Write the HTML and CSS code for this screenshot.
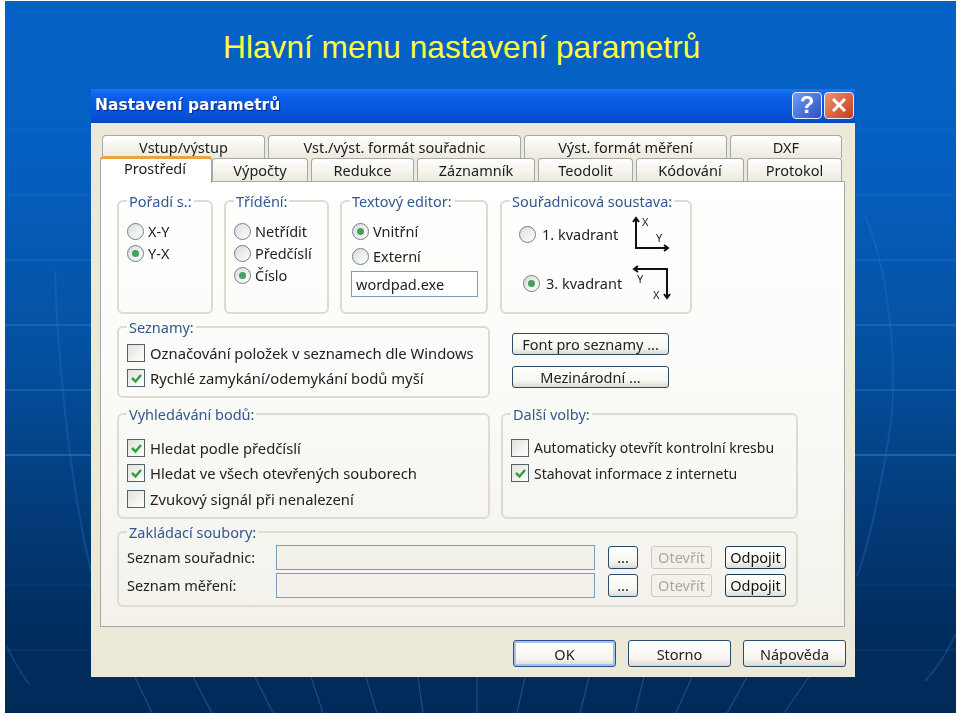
FILE: index.html
```html
<!DOCTYPE html>
<html lang="cs">
<head>
    <meta charset="UTF-8">
    <title>Hlavní menu nastavení parametrů</title>
    <link rel="stylesheet" href="styles.css">
</head>
<body>
    <div class="slide">
        <svg class="backdrop" width="951" height="712" viewBox="0 0 951 712">
            <g class="hlines">
                <path class="l1" d="M0 129H951"/>
                <path class="l2" d="M0 194H951"/>
                <path class="l3" d="M0 259H951"/>
                <path class="l4" d="M0 324H951"/>
                <path class="l4" d="M0 389H951"/>
                <path class="l5" d="M0 454H951"/>
                <path class="l1" d="M0 584H951"/>
                <path class="l1" d="M0 649H951"/>
            </g>
            <g class="rays">
                <path d="M130 676L147 712M188 676L207 712M250 676L268 712M306 676L318 712M361 676L372 712M413 676L418 712M472 676V712M520 676L512 712M584 676L575 712M639 676L630 712M687 676L671 712M742 676L722 712M804 676L779 712"/>
            </g>
            <g class="curves">
                <path d="M50 270C52 340 62 470 86 570"/>
                <path d="M860 215C885 270 895 380 883 440C875 490 865 540 852 575"/>
                <path d="M2 645C8 660 16 672 24 683"/>
                <path d="M920 680C935 665 945 645 951 632"/>
            </g>
        </svg>

        <h1 class="title">Hlavní menu nastavení parametrů</h1>

        <div class="dialog">
            <div class="titlebar">
                <span class="titlebar-text">Nastavení parametrů</span>
                <span class="win-btn win-help">?</span>
                <span class="win-btn win-close">
                    <svg width="18" height="18" viewBox="0 0 18 18"><path d="M3 3L15 15M15 3L3 15"/></svg>
                </span>
            </div>

            <div class="tabs tabs-back">
                <div class="tab w163">Vstup/výstup</div>
                <div class="tab w253">Vst./výst. formát souřadnic</div>
                <div class="tab w203">Výst. formát měření</div>
                <div class="tab w112">DXF</div>
            </div>
            <div class="tabs tabs-front">
                <div class="tab tab-active">Prostředí</div>
                <div class="tab w96">Výpočty</div>
                <div class="tab w103">Redukce</div>
                <div class="tab w118">Záznamník</div>
                <div class="tab w95">Teodolit</div>
                <div class="tab w108">Kódování</div>
                <div class="tab w95">Protokol</div>
            </div>

            <div class="panel">
                <div class="row row-top">
                    <fieldset class="group g-poradi">
                        <legend>Pořadí s.:</legend>
                        <div class="opts">
                            <div class="opt"><span class="radio"></span>X-Y</div>
                            <div class="opt"><span class="radio on"></span>Y-X</div>
                        </div>
                    </fieldset>
                    <fieldset class="group g-trideni">
                        <legend>Třídění:</legend>
                        <div class="opts">
                            <div class="opt"><span class="radio"></span>Netřídit</div>
                            <div class="opt"><span class="radio"></span>Předčíslí</div>
                            <div class="opt"><span class="radio on"></span>Číslo</div>
                        </div>
                    </fieldset>
                    <fieldset class="group g-editor">
                        <legend>Textový editor:</legend>
                        <div class="opts">
                            <div class="opt"><span class="radio on"></span>Vnitřní</div>
                            <div class="opt opt-extern"><span class="radio"></span>Externí</div>
                            <div class="textbox">wordpad.exe</div>
                        </div>
                    </fieldset>
                    <fieldset class="group g-soustava">
                        <legend>Souřadnicová soustava:</legend>
                        <div class="quad">
                            <span class="radio"></span>1. kvadrant
                            <svg class="axes" width="42" height="38" viewBox="0 0 42 38">
                                <path d="M6 3V33H38M3 7L6 3L9 7M34 30L38 33L34 36"/>
                                <text x="12" y="11">X</text>
                                <text x="26" y="27">Y</text>
                            </svg>
                        </div>
                        <div class="quad quad-low">
                            <span class="radio on"></span>3. kvadrant
                            <svg class="axes" width="42" height="38" viewBox="0 0 42 38">
                                <path d="M4 5H37V34M8 2L4 5L8 8M34 30L37 34L40 30"/>
                                <text x="7" y="19">Y</text>
                                <text x="23" y="35">X</text>
                            </svg>
                        </div>
                    </fieldset>
                </div>

                <div class="row row-lists">
                    <fieldset class="group g-wide">
                        <legend>Seznamy:</legend>
                        <div class="checks-lists">
                            <div class="opt check-row"><span class="check"></span>Označování položek v seznamech dle Windows</div>
                            <div class="opt check-row">
                                <span class="check"><svg width="15" height="15" viewBox="0 0 15 15"><path d="M3 7L6.500 10.500L12 4"/></svg></span>Rychlé zamykání/odemykání bodů myší
                            </div>
                        </div>
                    </fieldset>
                    <div class="side-btns">
                        <button class="btn">Font pro seznamy ...</button>
                        <button class="btn">Mezinárodní ...</button>
                    </div>
                </div>

                <div class="row row-search">
                    <fieldset class="group g-wide">
                        <legend>Vyhledávání bodů:</legend>
                        <div class="checks">
                            <div class="opt check-row">
                                <span class="check"><svg width="15" height="15" viewBox="0 0 15 15"><path d="M3 7L6.500 10.500L12 4"/></svg></span>Hledat podle předčíslí
                            </div>
                            <div class="opt check-row">
                                <span class="check"><svg width="15" height="15" viewBox="0 0 15 15"><path d="M3 7L6.500 10.500L12 4"/></svg></span>Hledat ve všech otevřených souborech
                            </div>
                            <div class="opt check-row"><span class="check"></span>Zvukový signál při nenalezení</div>
                        </div>
                    </fieldset>
                    <fieldset class="group g-more">
                        <legend>Další volby:</legend>
                        <div class="checks">
                            <div class="opt check-row"><span class="check"></span>Automaticky otevřít kontrolní kresbu</div>
                            <div class="opt check-row">
                                <span class="check"><svg width="15" height="15" viewBox="0 0 15 15"><path d="M3 7L6.500 10.500L12 4"/></svg></span>Stahovat informace z internetu
                            </div>
                        </div>
                    </fieldset>
                </div>

                <fieldset class="group g-files">
                    <legend>Zakládací soubory:</legend>
                    <div class="file-row">
                        <span class="file-label">Seznam souřadnic:</span>
                        <span class="file-input"></span>
                        <button class="btn btn-dots">...</button>
                        <button class="btn btn-small" disabled>Otevřít</button>
                        <button class="btn btn-small btn-strong">Odpojit</button>
                    </div>
                    <div class="file-row">
                        <span class="file-label">Seznam měření:</span>
                        <span class="file-input"></span>
                        <button class="btn btn-dots">...</button>
                        <button class="btn btn-small" disabled>Otevřít</button>
                        <button class="btn btn-small btn-strong">Odpojit</button>
                    </div>
                </fieldset>
            </div>

            <div class="actions">
                <button class="btn btn-action btn-default">OK</button>
                <button class="btn btn-action">Storno</button>
                <button class="btn btn-action">Nápověda</button>
            </div>
        </div>
    </div>
</body>
</html>
```

FILE: styles.css
```css
* {
    box-sizing: border-box;
    margin: 0;
    padding: 0;
}

html, body {
    height: 716px;
    overflow: hidden;
    background: #fff;
}

.slide {
    position: relative;
    width: 951px;
    height: 712px;
    margin: 1px 0 0 5px;
    background: linear-gradient(180deg, #0661c6 0%, #0560c2 20%, #04509f 50%, #033f80 68%, #012d5e 88%, #012a58 100%);
    font-family: "Noto Sans", sans-serif;
}

.backdrop {
    position: absolute;
    left: 0;
    top: 0;
}

.backdrop path {
    fill: none;
}

.hlines path {
    stroke: #3b85e0;
    stroke-width: 1.500;
}

.hlines .l1 { opacity: .12; }
.hlines .l2 { opacity: .2; }
.hlines .l3 { opacity: .3; }
.hlines .l4 { opacity: .45; }
.hlines .l5 { opacity: .6; }

.rays path {
    stroke: #1a4c8c;
    stroke-width: 1.200;
}

.curves path {
    stroke: #2a76d0;
    stroke-width: 2;
    opacity: .3;
}

.title {
    position: relative;
    height: 88px;
    padding: 26px 0 0 218px;
    font: normal 31.700px/40px "Liberation Sans", Arial, sans-serif;
    color: #ffff3c;
}

.dialog {
    position: relative;
    width: 764px;
    height: 588px;
    margin-left: 86px;
    background: #ece9d8;
    filter: blur(.35px);
}

.titlebar {
    display: flex;
    align-items: center;
    height: 34px;
    padding: 0 1px 2px 4px;
    background: linear-gradient(180deg, #1a74f2 0%, #0a5ee6 25%, #0754dc 70%, #0848c6 100%);
}

.titlebar-text {
    flex: 1;
    font: bold 15.500px/20px "DejaVu Sans", sans-serif;
    color: #fff;
    text-shadow: 1px 1px 1px #0a2a80;
}

.win-btn {
    display: flex;
    align-items: center;
    justify-content: center;
    width: 30px;
    height: 27px;
    margin-left: 2px;
    border: 1px solid #e6eeff;
    border-radius: 4px;
}

.win-help {
    background: linear-gradient(135deg, #6e9df2, #2c50c8);
    font: bold 24px/24px "Liberation Sans", Arial, sans-serif;
    color: #fff;
}

.win-close {
    background: linear-gradient(135deg, #ec9378, #c63c18);
}

.win-close path {
    fill: none;
    stroke: #fff;
    stroke-width: 3;
}

.tabs {
    display: flex;
    font-size: 14.500px;
    color: #1c1c1c;
}

.tabs-back {
    gap: 3px;
    margin: 12px 0 0 11px;
    height: 23px;
}

.tabs-front {
    gap: 3px;
    margin-left: 9px;
    height: 23px;
    position: relative;
    z-index: 2;
}

.tab {
    display: flex;
    align-items: center;
    justify-content: center;
    border: 1px solid #a3a9a9;
    border-bottom: 0;
    border-radius: 4px 4px 0 0;
    background: linear-gradient(180deg, #fff, #ece9dc);
    line-height: 20px;
}

.w163 { width: 163px; }
.w253 { width: 253px; }
.w203 { width: 203px; }
.w112 { width: 112px; }
.w96 { width: 96px; margin-left: -3px; }
.w103 { width: 103px; }
.w118 { width: 118px; }
.w95 { width: 95px; }
.w108 { width: 108px; }

.tab-active {
    width: 112px;
    height: 27px;
    margin-top: -2px;
    padding: 0 2px 7px 0;
    background: #fff;
    border-top: 3px solid #eda33c;
    border-color: #eda33c #a3a9a9 #fff;
}

.panel {
    position: relative;
    width: 745px;
    height: 446px;
    margin-left: 9px;
    padding: 10px 0 0 16px;
    border: 1px solid #a3a9a9;
    background: linear-gradient(180deg, #fff 0%, #fafaf7 50%, #f3f1ea 100%);
    font-size: 14.500px;
    color: #222;
}

.row {
    display: flex;
}

.row-top {
    height: 122px;
}

.row-lists {
    height: 80px;
    margin-top: 4px;
}

.row-search {
    height: 114px;
    margin-top: 7px;
}

.group {
    border: 2px solid #dedcd0;
    border-radius: 6px;
    min-width: 0;
}

.group legend {
    margin-left: 8px;
    padding: 0 2px;
    font-size: 14.500px;
    line-height: 18px;
    white-space: nowrap;
    color: #33578f;
}

.g-poradi { width: 96px; margin-right: 11px; }
.g-trideni { width: 105px; margin-right: 11px; }
.g-editor { width: 148px; margin-right: 12px; }
.g-soustava { width: 192px; }
.g-wide { width: 373px; font-size: 14.800px; }
.g-more { width: 297px; margin-left: 11px; font-size: 14px; }
.g-files { width: 681px; height: 84px; margin-top: 4px; padding-top: 2px; }

.opts {
    padding: 10px 0 0 8px;
}

.opt {
    display: flex;
    align-items: center;
    height: 22px;
    white-space: nowrap;
}

.opt-extern {
    margin-top: 3px;
}

.radio {
    position: relative;
    flex: none;
    width: 17px;
    height: 17px;
    margin-right: 4px;
    border: 1px solid #6d8090;
    border-radius: 50%;
    background: linear-gradient(135deg, #dcdcd6, #fff);
}

.radio.on::after {
    content: "";
    position: absolute;
    left: 4px;
    top: 4px;
    width: 7px;
    height: 7px;
    border-radius: 50%;
    background: #45a05a;
}

.g-trideni .opts { padding-left: 8px; }
.g-editor .opts { padding-left: 10px; }

.textbox {
    width: 127px;
    height: 26px;
    margin: 4px 0 0 -1px;
    padding-left: 4px;
    border: 1px solid #7f9db9;
    background: #fff;
    line-height: 24px;
}

.quad {
    display: flex;
    align-items: center;
    height: 36px;
    margin: 6px 18px 0 17px;
    white-space: nowrap;
}

.quad-low {
    margin: 13px 18px 0 21px;
}

.quad .radio {
    margin-right: 6px;
}

.axes {
    flex: none;
    margin-left: auto;
}

.axes path {
    fill: none;
    stroke: #111;
    stroke-width: 2;
}

.axes text {
    font-size: 11px;
    fill: #222;
}

.check-row {
    height: 25.500px;
    padding-left: 8px;
}

.check {
    flex: none;
    width: 18px;
    height: 18px;
    margin-right: 5px;
    border: 1px solid #4d6470;
    background: linear-gradient(135deg, #e2e2da, #fff);
}

.check svg {
    display: block;
    margin: 1px;
}

.check path {
    fill: none;
    stroke: #33a040;
    stroke-width: 2.500;
}

.checks-lists {
    padding-top: 4px;
}

.checks {
    padding-top: 12px;
}

.side-btns {
    display: flex;
    flex-direction: column;
    gap: 11px;
    margin: 15px 0 0 22px;
}

.btn {
    flex: none;
    border: 1px solid #2b4c68;
    border-radius: 3px;
    background: linear-gradient(180deg, #fff 0%, #f6f5ef 70%, #dcdad0 100%);
    font-family: "Noto Sans", sans-serif;
    font-size: 14.500px;
    line-height: 18px;
    color: #222;
}

.side-btns .btn {
    width: 157px;
    height: 22px;
}

.file-row {
    display: flex;
    align-items: center;
    height: 28px;
    padding-left: 8px;
}

.file-label {
    flex: none;
    width: 149px;
}

.file-input {
    flex: none;
    width: 319px;
    height: 25px;
    margin-right: 13px;
    border: 1px solid #7f9db9;
    background: #f3f1ea;
}

.btn-dots {
    width: 30px;
    height: 23px;
    margin-right: 13px;
}

.btn-small {
    width: 61px;
    height: 23px;
    margin-right: 13px;
}

.btn-small:disabled {
    border-color: #cdcbbe;
    background: #f3f1ea;
    color: #a9a89e;
}

.btn-strong {
    border-color: #1c3a50;
    color: #111;
}

.actions {
    display: flex;
    justify-content: flex-end;
    gap: 12px;
    margin-top: 13px;
    padding-right: 9px;
}

.btn-action {
    width: 103px;
    height: 27px;
}

.btn-default {
    border-color: #2a4f8c;
    box-shadow: inset 0 0 0 2px #a4c0ec;
}
```
